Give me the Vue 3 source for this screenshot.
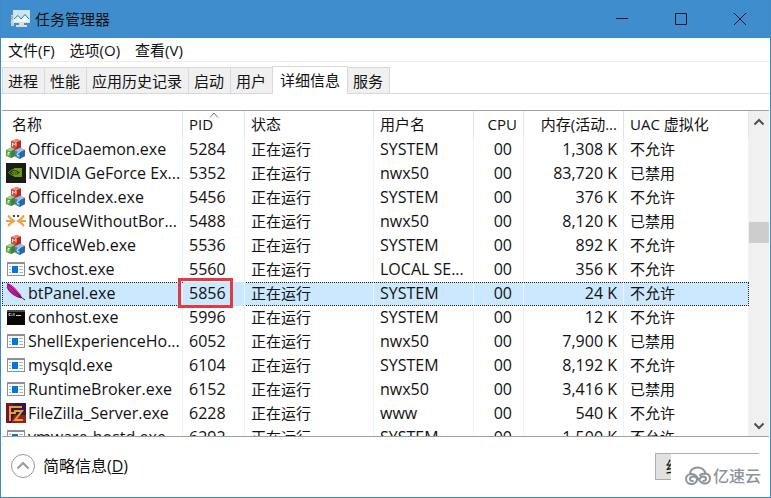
<script setup>
const menus = ['文件(F)', '选项(O)', '查看(V)']
const tabs = ['进程', '性能', '应用历史记录', '启动', '用户', '详细信息', '服务']
const activeTab = '详细信息'
const selectedPid = 5856

const rows = [
  ['office', 'OfficeDaemon.exe', 5284, 'SYSTEM', '1,308 K', '不允许'],
  ['nvidia', 'NVIDIA GeForce Ex...', 5352, 'nwx50', '83,720 K', '已禁用'],
  ['office', 'OfficeIndex.exe', 5456, 'SYSTEM', '376 K', '不允许'],
  ['mouse', 'MouseWithoutBor...', 5488, 'nwx50', '8,120 K', '已禁用'],
  ['office', 'OfficeWeb.exe', 5536, 'SYSTEM', '892 K', '不允许'],
  ['app', 'svchost.exe', 5560, 'LOCAL SE...', '356 K', '不允许'],
  ['feather', 'btPanel.exe', 5856, 'SYSTEM', '24 K', '不允许'],
  ['console', 'conhost.exe', 5996, 'SYSTEM', '12 K', '不允许'],
  ['app', 'ShellExperienceHo...', 6052, 'nwx50', '7,900 K', '已禁用'],
  ['app', 'mysqld.exe', 6104, 'SYSTEM', '8,192 K', '不允许'],
  ['app', 'RuntimeBroker.exe', 6152, 'nwx50', '3,416 K', '已禁用'],
  ['filezilla', 'FileZilla_Server.exe', 6228, 'www', '540 K', '不允许'],
  ['app', 'vmware-hostd.exe', 6292, 'SYSTEM', '1,500 K', '不允许'],
].map(([icon, name, pid, user, memory, uac]) => ({ icon, name, pid, user, memory, uac }))
</script>

<template>
  <div class="window">
    <header class="titlebar">
      <svg class="logo" viewBox="0 0 20 18" aria-hidden="true">
        <rect x="1" y="5" width="3" height="11" fill="#c3d3da" />
        <path d="M1 7h2M1 9h2" stroke="#7b98a8" />
        <rect x="3" y="0" width="17" height="13" fill="#dfdfd6" />
        <rect x="4" y="1" width="15" height="11" fill="#c4e8f6" />
        <path d="M4 9l4-3 3 3 4-4 4 4v3H4z" fill="#edf9fd" />
        <path d="M4 9l4-3.500L11 9l4-4.500L19 9" fill="none" stroke="#2f7ba6" />
        <path d="M9 13h5v2h3v2H6v-2h3z" fill="#d9dfdc" />
      </svg>
      <h1>任务管理器</h1>
      <div class="controls">
        <button type="button" aria-label="最小化"><svg viewBox="0 0 14 14"><path d="M1 6.500h12" /></svg></button>
        <button type="button" aria-label="最大化"><svg viewBox="0 0 14 14"><path d="M1.500 1.500h11v11h-11z" /></svg></button>
        <button type="button" aria-label="关闭"><svg viewBox="0 0 14 14"><path d="M1 1l12 12M13 1L1 13" /></svg></button>
      </div>
    </header>

    <nav class="menubar">
      <button v-for="m in menus" :key="m" type="button">{{ m }}</button>
    </nav>

    <div class="tabs" role="tablist">
      <button
        v-for="t in tabs"
        :key="t"
        type="button"
        role="tab"
        :aria-selected="t === activeTab"
        :class="['tab', { active: t === activeTab }]"
      >{{ t }}</button>
    </div>

    <main class="panel">
      <div class="list">
        <table>
          <colgroup>
            <col class="c-name"><col class="c-pid"><col class="c-state"><col class="c-user">
            <col class="c-cpu"><col class="c-mem"><col>
          </colgroup>
          <thead>
            <tr>
              <th>名称</th>
              <th class="sorted">
                PID
                <svg class="sort" viewBox="0 0 10 6" aria-hidden="true"><path d="M1 5.500l4-4.500 4 4.500" /></svg>
              </th>
              <th>状态</th>
              <th>用户名</th>
              <th class="num">CPU</th>
              <th class="num">内存(活动...</th>
              <th>UAC 虚拟化</th>
            </tr>
          </thead>
          <tbody>
            <tr v-for="r in rows" :key="r.pid" :class="{ selected: r.pid === selectedPid }">
              <td class="name">
                <div class="process">
                  <svg v-if="r.icon === 'office'" viewBox="0 0 20 20" aria-hidden="true">
                    <path d="M5 2l6-2 4 1.500v7L9.500 11 5 9z" fill="#d5483a" />
                    <path d="M5 2l6-2 4 1.500L9.500 3.500z" fill="#e98f82" />
                    <path d="M9.500 3.500l5.500-2v7L9.500 11z" fill="#b82c20" />
                    <path d="M6.500 7.500V4l1.800 2L10 3.500v4" fill="none" stroke="#f6dcd8" />
                    <path d="M0 11l5-2.500L9 10v7l-4 2-5-2z" fill="#5c9f4c" />
                    <path d="M0 11l5-2.500L9 10l-4.500 2.500z" fill="#9fcb8d" />
                    <path d="M4.500 12.500L9 10v7l-4 2z" fill="#3f8338" />
                    <path d="M2 16.500v-3h2M2 15h1.500" fill="none" stroke="#dcefd6" />
                    <path d="M9 11.500L14.500 9l4.500 2v6l-5.500 3L9 17.500z" fill="#4385c4" />
                    <path d="M9 11.500L14.500 9l4.500 2-5.500 2.500z" fill="#93c3e8" />
                    <path d="M13.500 13.500L19 11v6l-5.500 3z" fill="#2865ab" />
                    <path d="M13.500 13.500q-2.500 0-2.500 2t2.500 1.500" fill="none" stroke="#e3f0fa" />
                  </svg>
                  <svg v-else-if="r.icon === 'nvidia'" viewBox="0 0 20 20" aria-hidden="true">
                    <rect width="20" height="20" fill="#1b1d1a" />
                    <path d="M8 5h8v9H8z" fill="#669c0a" />
                    <path d="M2.500 9.500Q8 3.500 14.500 9.500 8 15.500 2.500 9.500z" fill="#1b1d1a" stroke="#76a91a" />
                    <path d="M5.500 9.500Q8 6.500 11.500 9.500 8 13 5.500 9.500z" fill="#1b1d1a" stroke="#76a91a" />
                    <circle cx="8.500" cy="9.700" r="1" fill="#76a91a" />
                  </svg>
                  <svg v-else-if="r.icon === 'mouse'" viewBox="0 0 20 20" aria-hidden="true">
                    <path d="M2 4.500L7 10l-5 5M18 4.500L13 10l5 5M0 10h7M20 10h-7" fill="none" stroke="#f0a046" stroke-width="2" />
                    <path d="M5 7l5 3-5 3zM15 7l-5 3 5 3z" fill="#f0a046" />
                    <path d="M7 4h2v2H7zM11 4h2v2h-2z" fill="#444" />
                  </svg>
                  <svg v-else-if="r.icon === 'feather'" viewBox="0 0 20 20" aria-hidden="true">
                    <path d="M1 0q4 1 8 5l6 7 1 3-4-1Q4 11 1 4z" fill="#b3169b" />
                    <path d="M1 0q5 2 9 7l5 6-5-3Q3 6 1 0z" fill="#e22a9b" />
                    <path d="M1 4q3 7 11 10l3 1" fill="none" stroke="#5c1c8b" />
                    <path d="M2 1l12 12.500 5 3.500" fill="none" stroke="#4a123e" />
                  </svg>
                  <svg v-else-if="r.icon === 'console'" viewBox="0 0 20 20" aria-hidden="true">
                    <rect x="1" y="3" width="18" height="15" fill="#080808" />
                    <path d="M1 3h18v2H1z" fill="#4b4b4b" />
                    <path d="M4.500 6.500H3v2h1.500M6 6.500v1M6 8v1M8 6v3M10 8.500h5" fill="none" stroke="#ccc" />
                  </svg>
                  <svg v-else-if="r.icon === 'filezilla'" viewBox="0 0 20 20" aria-hidden="true">
                    <rect width="20" height="20" fill="#30194f" />
                    <path d="M0 0h8L3 20H0z" fill="#6d1834" />
                    <path d="M5 20l3-8h12v8z" fill="#97201f" />
                    <path d="M4 18V4h12M4 10h6M8 8h8l-7 9h8" fill="none" stroke="#e5a12c" stroke-width="2" />
                  </svg>
                  <svg v-else viewBox="0 0 20 20" aria-hidden="true">
                    <rect x="1.500" y="3.500" width="17" height="13" fill="#fff" stroke="#8b8f94" />
                    <path d="M1 3h18v2H1z" fill="#8b8f94" />
                    <rect x="6" y="7" width="6" height="7" fill="#0078d7" />
                    <path d="M3 7.500h2M3 10.500h2M3 13.500h2M13.500 7.500H17M13.500 10.500H17M13.500 13.500H17" stroke="#9fb4c5" />
                  </svg>
                  <span>{{ r.name }}</span>
                </div>
              </td>
              <td class="pid">{{ r.pid }}<span v-if="r.pid === selectedPid" class="mark"></span></td>
              <td class="cjk">正在运行</td>
              <td>{{ r.user }}</td>
              <td class="num cpu">00</td>
              <td class="num">{{ r.memory }}</td>
              <td class="cjk">{{ r.uac }}</td>
            </tr>
          </tbody>
        </table>
      </div>
      <div class="scrollbar">
        <button type="button" aria-label="向上滚动"><svg viewBox="0 0 12 8"><path d="M1.500 6.500L6 2l4.500 4.500" /></svg></button>
        <div class="track"><div class="before"></div><div class="thumb"></div><div class="after"></div></div>
        <button type="button" aria-label="向下滚动"><svg viewBox="0 0 12 8"><path d="M1.500 1.500L6 6l4.500-4.500" /></svg></button>
      </div>
    </main>

    <footer class="footer">
      <button type="button" class="fewer">
        <svg viewBox="0 0 26 26" aria-hidden="true"><circle cx="13" cy="13" r="11.500" /><path d="M7.500 15.500L13 10l5.500 5.500" /></svg>
        <span>简略信息(<u>D</u>)</span>
      </button>
      <button type="button" class="end">结束任务(E)</button>
    </footer>

    <div class="watermark">
      <svg viewBox="0 0 26 20" aria-hidden="true">
        <path d="M5 8C5 4 8.500 1.500 12.500 1.500S20 4 20.500 7.500C23.500 8 25 10 25 12.500c0 3-2.500 5-5.500 5-3.500 0-5-2.500-6.500-5S10 8 6.500 8C3.500 8 1 10 1 13s2.500 5 5.500 5 5.500-2 5.500-4.500S10 10.500 8 10.500s-3 1.200-3 2.700 2 2.300 3.500 1.300M14.500 10c1-2 3-2.500 6-2.500M15 13.500c0-2 1.500-3 3-3s3 1 3 2.500-2 2.500-3.500 1.500" />
      </svg>
      <span>亿速云</span>
    </div>
  </div>
</template>

<style>
body {
  margin: 0;
}
</style>

<style scoped>
.window {
  position: relative;
  display: flex;
  flex-direction: column;
  box-sizing: border-box;
  height: 100vh;
  border: solid #4089c9;
  border-width: 0 1px 1px;
  background: #fff;
  color: #111;
  font: 15px/24px "Open Sans", "Noto Sans CJK SC", sans-serif;
  overflow: hidden;
}
button {
  margin: 0;
  padding: 0;
  border: 0;
  background: none;
  color: inherit;
  font: inherit;
}
svg {
  display: block;
  flex: none;
}
.titlebar {
  display: flex;
  align-items: center;
  flex: none;
  height: 38px;
  padding: 0 1px 0 9px;
  background: #408dcd;
}
.logo {
  width: 20px;
  height: 18px;
}
h1 {
  flex: 1;
  margin: 0 0 0 5px;
  font-size: 15px;
  font-weight: 400;
}
.controls {
  display: flex;
}
.controls button {
  display: grid;
  place-items: center;
  width: 59px;
  height: 38px;
}
.controls svg {
  width: 14px;
  height: 14px;
  fill: none;
  stroke: #0b1a2b;
}
.menubar {
  display: flex;
  flex: none;
  gap: 15px;
  height: 23px;
  padding-left: 7px;
  border-bottom: 1px solid #eee;
}
.tabs {
  display: flex;
  align-items: flex-end;
  flex: none;
  height: 31px;
  padding-left: 1px;
  border-bottom: 1px solid #d9d9d9;
}
.tab {
  height: 26px;
  padding: 0 6px 0 5px;
  border: solid #d9d9d9;
  border-width: 1px 1px 0 0;
  background: #f0f0f0;
}
.tab:first-child {
  border-left-width: 1px;
}
.tab.active {
  height: 28px;
  margin: 0 0 -1px -1px;
  padding: 0 7px 2px;
  border-left-width: 1px;
  background: #fff;
}
.panel {
  display: flex;
  flex: 1;
  min-height: 0;
  margin: 16px 1px 0;
  border: solid #a0a0a0;
  border-width: 1px 0;
}
.list {
  flex: 1;
  min-width: 0;
  overflow: hidden;
}
table {
  width: 100%;
  table-layout: fixed;
  border-collapse: separate;
  border-spacing: 0;
  font-size: 16px;
}
.c-name { width: 181px; }
.c-pid { width: 62px; }
.c-state { width: 129px; }
.c-user { width: 100px; }
.c-cpu { width: 50px; }
.c-mem { width: 100px; }
th,
td {
  box-sizing: border-box;
  height: 24px;
  padding: 0 6px;
  border-right: 1px solid #edf3f9;
  font-weight: 400;
  line-height: 22px;
  text-align: left;
  vertical-align: top;
  white-space: nowrap;
}
th {
  height: 27px;
  border-color: #dfe5ea;
  font-size: 15px;
  line-height: 27px;
}
th:first-child {
  padding-left: 10px;
}
.cjk {
  font-size: 15px;
}
.num {
  text-align: right;
}
.cpu {
  padding-right: 11px;
}
.name {
  padding: 0 0 0 4px;
}
.process {
  display: flex;
  align-items: center;
  gap: 2px;
}
.process svg {
  width: 20px;
  height: 20px;
}
.sorted,
.pid {
  position: relative;
}
.sort {
  position: absolute;
  top: 1px;
  left: 26px;
  width: 10px;
  height: 6px;
  fill: none;
  stroke: #777;
}
.selected {
  outline: 1px dotted #222;
  outline-offset: -1px;
}
.selected td {
  background: #cce8ff;
}
.mark {
  position: absolute;
  inset: -4px 11px -2px -5px;
  border: 3px solid #e13b40;
}
.scrollbar {
  display: flex;
  flex: none;
  flex-direction: column;
  width: 20px;
  background: #f0f0f0;
}
.scrollbar button {
  display: grid;
  place-items: center;
  height: 21px;
}
.scrollbar svg {
  width: 12px;
  height: 8px;
  fill: none;
  stroke: #505050;
  stroke-width: 2;
}
.track {
  display: flex;
  flex: 1;
  flex-direction: column;
}
.before {
  flex: 90;
}
.thumb {
  height: 21px;
  background: #cdcdcd;
}
.after {
  flex: 173;
}
.footer {
  display: flex;
  align-items: flex-start;
  justify-content: space-between;
  flex: none;
  box-sizing: border-box;
  height: 60px;
  padding: 16px 11px 0 9px;
}
.fewer {
  display: flex;
  align-items: center;
  gap: 7px;
  font-size: 16px;
}
.fewer svg {
  width: 26px;
  height: 26px;
  fill: none;
  stroke: #999;
}
.fewer path {
  stroke-width: 2;
}
.end {
  box-sizing: border-box;
  width: 104px;
  height: 27px;
  border: 1px solid #adadad;
  background: #e1e1e1;
  font-size: 16px;
}
.watermark {
  position: absolute;
  right: -1px;
  bottom: -1px;
  display: flex;
  align-items: center;
  gap: 2px;
  box-sizing: border-box;
  width: 100px;
  height: 44px;
  padding: 0 0 0 14px;
  background: #fff;
  color: #8d939c;
  font-size: 16px;
  font-weight: 500;
}
.watermark svg {
  width: 26px;
  height: 20px;
  fill: none;
  stroke: #8d939c;
  stroke-width: 2;
}
</style>
